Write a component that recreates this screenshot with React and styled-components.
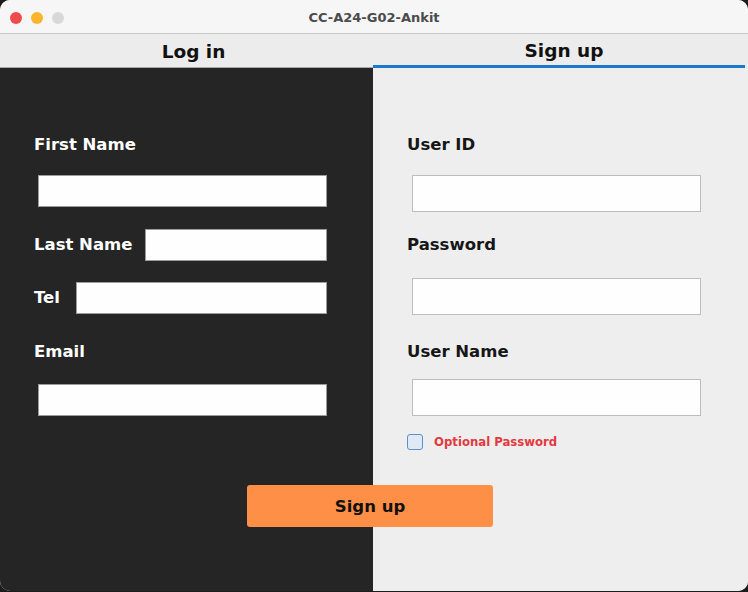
import React from "react";
import styled, { createGlobalStyle } from "styled-components";

const GlobalStyle = createGlobalStyle`
  html, body {
    margin: 0;
    padding: 0;
    background: #1c1c1c;
  }
  * {
    box-sizing: border-box;
  }
`;

const Window = styled.div`
  width: 748px;
  height: 591px;
  border-radius: 10px;
  overflow: hidden;
  display: flex;
  flex-direction: column;
  font-family: "DejaVu Sans", Verdana, sans-serif;
  background: #eeeeee;
`;

const TitleBar = styled.div`
  height: 34px;
  flex-shrink: 0;
  background: #f6f6f6;
  border-bottom: 1px solid #c9c9c9;
  display: flex;
  align-items: center;
  padding-top: 3px;
  position: relative;
`;

const Lights = styled.div`
  display: flex;
  gap: 9px;
  padding-left: 10px;
`;

const Light = styled.span`
  width: 12px;
  height: 12px;
  border-radius: 50%;
  background: ${(p) => p.color};
`;

const Title = styled.div`
  position: absolute;
  left: 0;
  right: 0;
  top: 10px;
  text-align: center;
  font-size: 13px;
  font-weight: bold;
  color: #4b4b4b;
  pointer-events: none;
`;

const TabBar = styled.div`
  height: 34px;
  flex-shrink: 0;
  display: grid;
  grid-template-columns: 373px 1fr;
  background: #ececec;
`;

const Tab = styled.div`
  display: flex;
  align-items: center;
  justify-content: center;
  font-size: 18.5px;
  font-weight: bold;
  color: #111;
  padding: 2px 0 0 ${(p) => (p.active ? 10 : 14)}px;
  border-bottom: ${(p) => (p.active ? "3px solid #1a79c8" : "1px solid #a9a9a9")};
  margin-right: ${(p) => (p.active ? "3px" : "0")};
`;

const Body = styled.div`
  flex: 1;
  display: flex;
  flex-direction: column;
  background: linear-gradient(to right, #252525 373px, #eeeeee 373px);
`;

const Columns = styled.div`
  display: grid;
  grid-template-columns: 373px 1fr;
`;

const Column = styled.div`
  display: flex;
  flex-direction: column;
  align-items: flex-start;
  padding: 67px 0 0 34px;
`;

const Label = styled.div`
  font-size: 16.5px;
  font-weight: bold;
  line-height: 20px;
  color: ${(p) => (p.dark ? "#ffffff" : "#161616")};
  margin-top: ${(p) => p.top || 0}px;
  white-space: nowrap;
`;

const Input = styled.input`
  display: block;
  margin: ${(p) => p.top || 0}px 0 0 ${(p) => p.left || 0}px;
  width: 289px;
  height: ${(p) => p.h || 32}px;
  background: #fefefe;
  border: 1px solid ${(p) => (p.dark ? "#9c9c9c" : "#bdbdbd")};
  border-radius: 0;
  padding: 0 6px;
  outline: none;
`;

const InlineRow = styled.div`
  display: flex;
  align-items: center;
  width: 293px;
  gap: ${(p) => p.gap}px;
  margin-top: ${(p) => p.top}px;
`;

const InlineInput = styled(Input)`
  flex: 1;
  min-width: 0;
  width: auto;
  margin: 0;
`;

const CheckRow = styled.label`
  display: flex;
  align-items: center;
  gap: 11px;
  margin-top: 18px;
  height: 16px;
`;

const Box = styled.span`
  width: 16px;
  height: 16px;
  border: 1.5px solid #5a91c6;
  border-radius: 3px;
  background: #dfeaf6;
`;

const CheckText = styled.span`
  font-size: 11.7px;
  font-weight: bold;
  color: #e23a40;
`;

const Button = styled.button`
  align-self: flex-start;
  margin: 35px 0 0 247px;
  width: 246px;
  height: 42px;
  border: none;
  border-radius: 3px;
  background: #fd9046;
  font-family: "DejaVu Sans", Verdana, sans-serif;
  font-size: 16.5px;
  font-weight: bold;
  color: #111111;
  padding-top: 2px;
`;

export default function App() {
  return (
    <>
      <GlobalStyle />
      <Window>
        <TitleBar>
          <Lights>
            <Light color="#f04b4c" />
            <Light color="#fcb42c" />
            <Light color="#d8d8d8" />
          </Lights>
          <Title>CC-A24-G02-Ankit</Title>
        </TitleBar>
        <TabBar>
          <Tab>Log in</Tab>
          <Tab active>Sign up</Tab>
        </TabBar>
        <Body>
          <Columns>
            <Column>
              <Label dark>First Name</Label>
              <Input dark top={20} left={4} />
              <InlineRow top={22} gap={13}>
                <Label dark>Last Name</Label>
                <InlineInput dark />
              </InlineRow>
              <InlineRow top={21} gap={16}>
                <Label dark>Tel</Label>
                <InlineInput dark />
              </InlineRow>
              <Label dark top={28}>Email</Label>
              <Input dark top={22} left={4} />
            </Column>
            <Column>
              <Label>User ID</Label>
              <Input top={20} left={5} h={37} />
              <Label top={23}>Password</Label>
              <Input top={23} left={5} h={37} type="password" />
              <Label top={27}>User Name</Label>
              <Input top={17} left={5} h={37} />
              <CheckRow>
                <Box />
                <CheckText>Optional Password</CheckText>
              </CheckRow>
            </Column>
          </Columns>
          <Button>Sign up</Button>
        </Body>
      </Window>
    </>
  );
}
